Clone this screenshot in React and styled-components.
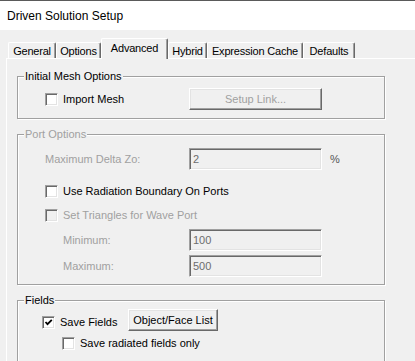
import React from "react";
import styled, { createGlobalStyle } from "styled-components";

const GlobalStyle = createGlobalStyle`
  html, body {
    margin: 0;
    padding: 0;
    width: 415px;
    height: 361px;
    overflow: hidden;
    background: #f0f0f0;
  }
  body {
    font-family: "Liberation Sans", Arial, sans-serif;
    font-size: 11px;
    color: #000;
  }
  * { box-sizing: border-box; }
`;

const Window = styled.div`
  width: 415px;
  height: 361px;
  display: flex;
  flex-direction: column;
  overflow: hidden;
  background: #f0f0f0;
`;

const TitleBar = styled.div`
  height: 30px;
  flex: none;
  background: #fff;
  border-top: 1px solid #5a5a5a;
  padding-left: 7px;
  display: flex;
  align-items: center;
  font-size: 12px;
  color: #000;
`;

const TabStrip = styled.div`
  height: 28px;
  flex: none;
  display: flex;
  align-items: flex-end;
  padding-left: 8px;
  position: relative;
  z-index: 1;
`;

const Tab = styled.div`
  width: ${(p) => p.$w}px;
  height: ${(p) => (p.$active ? 21 : 16)}px;
  margin-bottom: ${(p) => (p.$active ? -1 : 0)}px;
  background: #f0f0f0;
  border-top: 1px solid #fff;
  border-left: 1px solid #fff;
  border-right: 1px solid #696969;
  box-shadow: inset -1px 0 0 #a0a0a0;
  border-radius: 2px 2px 0 0;
  display: flex;
  align-items: center;
  justify-content: center;
  padding-bottom: ${(p) => (p.$active ? 2 : 0)}px;
  white-space: nowrap;
  letter-spacing: -0.2px;
`;

const Panel = styled.div`
  flex: 1;
  margin-left: 6px;
  border-top: 1px solid #fff;
  border-left: 1px solid #fff;
  padding: 17px 0 0 10px;
  display: flex;
  flex-direction: column;
`;

const Group = styled.div`
  position: relative;
  width: 368px;
  flex: none;
  border: 1px solid #a0a0a0;
  box-shadow: inset 1px 1px 0 #fff, 1px 1px 0 #fff;
  margin-top: ${(p) => p.$mt || 0}px;
  padding: ${(p) => p.$pad};
`;

const Legend = styled.span`
  position: absolute;
  top: -7px;
  left: 6px;
  padding: 0 1px;
  line-height: 13px;
  background: #f0f0f0;
  color: ${(p) => (p.$disabled ? "#a0a0a0" : "#000")};
  white-space: nowrap;
`;

const ButtonRow = styled.div`
  display: grid;
  grid-template-columns: ${(p) => p.$cols};
  height: 22px;
  align-items: center;
`;

const CheckLabel = styled.div`
  display: flex;
  align-items: center;
  gap: 5px;
  height: 13px;
  line-height: 13px;
  white-space: nowrap;
  color: ${(p) => (p.$disabled ? "#a0a0a0" : "#000")};
  margin-top: ${(p) => p.$mt || 0}px;
  padding-left: ${(p) => p.$indent || 0}px;
  align-self: ${(p) => (p.$top ? "start" : "auto")};
`;

const Box = styled.span`
  width: 13px;
  height: 13px;
  flex: none;
  display: inline-flex;
  align-items: center;
  justify-content: center;
  background: ${(p) => (p.$disabled ? "#f0f0f0" : "#fff")};
  border-top: 1px solid #a0a0a0;
  border-left: 1px solid #a0a0a0;
  border-bottom: 1px solid #fff;
  border-right: 1px solid #fff;
  box-shadow: inset 1px 1px 0 #696969, inset -1px -1px 0 #e3e3e3;
`;

const Button = styled.button`
  width: ${(p) => p.$w}px;
  height: 22px;
  padding: 0;
  margin: 0;
  font-family: "Liberation Sans", Arial, sans-serif;
  font-size: 11px;
  color: ${(p) => (p.disabled ? "#a0a0a0" : "#000")};
  background: #f0f0f0;
  border-top: 1px solid #fff;
  border-left: 1px solid #fff;
  border-bottom: 1px solid #696969;
  border-right: 1px solid #696969;
  box-shadow: inset -1px -1px 0 #a0a0a0, inset 1px 1px 0 #e3e3e3;
  border-radius: 0;
  white-space: nowrap;
`;

const FieldRow = styled.div`
  display: grid;
  grid-template-columns: ${(p) => 144 - (p.$indent || 0)}px 133px auto;
  height: 22px;
  align-items: center;
  margin-top: ${(p) => p.$mt || 0}px;
  padding-left: ${(p) => p.$indent || 0}px;
`;

const FieldLabel = styled.span`
  color: #a0a0a0;
  white-space: nowrap;
`;

const Input = styled.div`
  height: 22px;
  display: flex;
  align-items: center;
  padding-left: 3px;
  color: #6d6d6d;
  background: #f0f0f0;
  border-top: 1px solid #a0a0a0;
  border-left: 1px solid #a0a0a0;
  border-bottom: 1px solid #fff;
  border-right: 1px solid #fff;
  box-shadow: inset 1px 1px 0 #696969, inset -1px -1px 0 #e3e3e3;
`;

const Unit = styled.span`
  margin-left: 8px;
  color: #555;
`;

const Check = () => (
  <svg width="9" height="9" viewBox="0 0 9 9">
    <path d="M1.5 4 L3.5 6.2 L7.8 1.8" fill="none" stroke="#000" strokeWidth="1.8" />
  </svg>
);

const CheckBox = ({ checked, disabled, children, ...rest }) => (
  <CheckLabel $disabled={disabled} {...rest}>
    <Box $disabled={disabled}>{checked && <Check />}</Box>
    <span>{children}</span>
  </CheckLabel>
);

const tabs = [
  { label: "General", w: 48 },
  { label: "Options", w: 45 },
  { label: "Advanced", w: 67, active: true },
  { label: "Hybrid", w: 39 },
  { label: "Expression Cache", w: 96 },
  { label: "Defaults", w: 52 },
];

export default function App() {
  return (
    <>
      <GlobalStyle />
      <Window>
        <TitleBar>Driven Solution Setup</TitleBar>
        <TabStrip>
          {tabs.map((t) => (
            <Tab key={t.label} $w={t.w} $active={t.active}>
              {t.label}
            </Tab>
          ))}
        </TabStrip>
        <Panel>
          <Group $pad="11px 0 8px 27px">
            <Legend>Initial Mesh Options</Legend>
            <ButtonRow $cols="144px 133px">
              <CheckBox>Import Mesh</CheckBox>
              <Button disabled $w={133}>Setup Link...</Button>
            </ButtonRow>
          </Group>

          <Group $mt={15} $pad="0 0 7px 27px">
            <Legend $disabled>Port Options</Legend>
            <FieldRow $mt={13}>
              <FieldLabel>Maximum Delta Zo:</FieldLabel>
              <Input>2</Input>
              <Unit>%</Unit>
            </FieldRow>
            <CheckBox $mt={15}>Use Radiation Boundary On Ports</CheckBox>
            <CheckBox $mt={11} disabled>Set Triangles for Wave Port</CheckBox>
            <FieldRow $mt={7} $indent={18}>
              <FieldLabel>Minimum:</FieldLabel>
              <Input>100</Input>
            </FieldRow>
            <FieldRow $mt={4} $indent={18}>
              <FieldLabel>Maximum:</FieldLabel>
              <Input>500</Input>
            </FieldRow>
          </Group>

          <Group $mt={15} $pad="8px 0 20px 24px">
            <Legend>Fields</Legend>
            <ButtonRow $cols="86px 90px">
              <CheckBox checked $top $mt={7}>Save Fields</CheckBox>
              <Button $w={90}>Object/Face List</Button>
            </ButtonRow>
            <CheckBox $mt={6} $indent={20}>Save radiated fields only</CheckBox>
          </Group>
        </Panel>
      </Window>
    </>
  );
}
